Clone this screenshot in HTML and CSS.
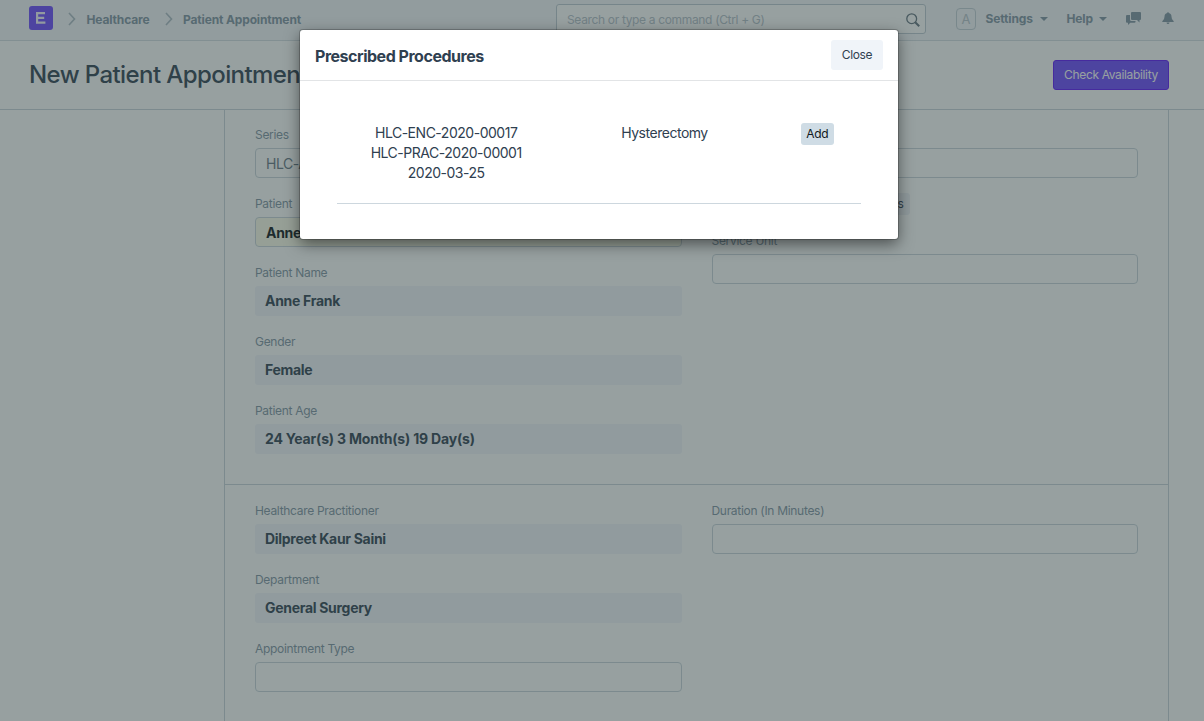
FILE: index.html
```html
<!DOCTYPE html>
<html lang="en">
<head>
<meta charset="utf-8">
<title>New Patient Appointment</title>
<link rel="stylesheet" href="styles.css">
</head>
<body>
<header class="navbar">
  <div class="logo"><svg width="24" height="24" viewBox="0 0 24 24"><rect width="24" height="24" rx="3" fill="#6a46ff"/><path d="M16 7.1H8.1V16.7H16.4M8.1 11.9H15.2" fill="none" stroke="#f4f2ff" stroke-width="2.2"/></svg></div>
  <svg class="chev" width="8" height="14" viewBox="0 0 8 14"><path d="M1 1l5.500 6L1 13" /></svg>
  <a class="crumb crumb-first">Healthcare</a>
  <svg class="chev" width="8" height="14" viewBox="0 0 8 14"><path d="M1 1l5.500 6L1 13" /></svg>
  <a class="crumb crumb-last">Patient Appointment</a>
  <div class="search">
    <span class="search-text">Search or type a command (Ctrl + G)</span>
    <svg class="lens" width="14" height="14" viewBox="0 0 14 14"><circle cx="5.700" cy="5.700" r="4.900" fill="none" stroke="#62727e" stroke-width="1.300"/><path d="M9.200 9.200l4 4" stroke="#62727e" stroke-width="2"/></svg>
  </div>
  <div class="avatar">A</div>
  <a class="menu settings">Settings</a><i class="caret"></i>
  <a class="menu help">Help</a><i class="caret"></i>
  <svg class="chat" width="16" height="13" viewBox="0 0 16 13"><path fill="#7f93a2" d="M6 0h8q1 0 1 1v6q0 1-1 1h-.5v2.600L11 8H6q-1 0-1-1V1q0-1 1-1z"/><path fill="#7f93a2" d="M1 3h3v4.500q0 1.500 1.500 1.500h4v.8q0 1-1 1H4.300L2 13v-2.200H1q-1 0-1-1V4q0-1 1-1z"/></svg>
  <svg class="bell" width="12" height="12" viewBox="0 0 12 12"><path fill="#7f93a2" d="M5.200 1V.6q.8-.9 1.600 0V1q2.700.6 2.700 3.700 0 2.900 2.200 4.600v.7H.3v-.7Q2.500 7.600 2.500 4.700 2.500 1.600 5.200 1zM4.500 10.500h3q-.2 1.500-1.500 1.500t-1.500-1.500z"/></svg>
</header>
<div class="page-head">
  <h1 class="page-title">New Patient Appointment</h1>
  <button class="primary">Check Availability</button>
</div>
<main class="form">
  <section class="section first">
    <div class="col">
      <div class="field"><label class="label">Series</label><div class="input series">HLC-APP-.YYYY.-</div></div>
      <div class="field"><label class="label">Patient</label><div class="input required">Anne Frank</div></div>
      <div class="field"><label class="label">Patient Name</label><div class="value">Anne Frank</div></div>
      <div class="field"><label class="label">Gender</label><div class="value">Female</div></div>
      <div class="field"><label class="label">Patient Age</label><div class="value age">24 Year(s) 3 Month(s) 19 Day(s)</div></div>
    </div>
    <div class="col">
      <div class="field field-procedure"><label class="label">Procedure</label><div class="input"></div></div>
      <button class="get-procedures">Get Prescribed Clinical Procedures</button>
      <div class="field"><label class="label">Service Unit</label><div class="input"></div></div>
    </div>
  </section>
  <section class="section">
    <div class="col">
      <div class="field"><label class="label">Healthcare Practitioner</label><div class="value">Dilpreet Kaur Saini</div></div>
      <div class="field"><label class="label">Department</label><div class="value">General Surgery</div></div>
      <div class="field"><label class="label">Appointment Type</label><div class="input"></div></div>
    </div>
    <div class="col">
      <div class="field"><label class="label">Duration (In Minutes)</label><div class="input"></div></div>
    </div>
  </section>
</main>
<div class="backdrop">
  <div class="modal">
    <div class="modal-head"><h2 class="modal-title">Prescribed Procedures</h2><button class="close">Close</button></div>
    <div class="row">
      <div class="refs">HLC-ENC-2020-00017<br>HLC-PRAC-2020-00001<br>2020-03-25</div>
      <div class="procedure">Hysterectomy</div>
      <div class="action"><button class="add">Add</button></div>
    </div>
  </div>
</div>
</body>
</html>
```
FILE: styles.css
```css
* { box-sizing: border-box; }
body { margin: 0; height: 721px; overflow: hidden; background: #fff; color: #2f4050; font: 14px/20px Inter, "Liberation Sans", sans-serif; letter-spacing: -.48px; }
button { font-family: inherit; padding: 0 0 1px; border: 0; white-space: nowrap; letter-spacing: -.35px; }
h1, h2 { margin: 0; }
.navbar { display: flex; align-items: center; height: 41px; padding: 0 30px 4px 29px; background: #f4f6fa; border-bottom: 1px solid #d4dde2; font-size: 12px; color: #7f93a2; white-space: nowrap; }
.logo { width: 24px; height: 24px; margin-right: 15px; }
.chev { fill: none; stroke: #acbac4; stroke-width: 1.6; margin-top: 2px; }
.crumb, .menu { font-weight: 700; letter-spacing: -.14px; }
.crumb { padding-top: 4px; }
.menu { padding-top: 2px; }
.crumb-first { width: 78px; margin-left: 10.5px; }
.crumb-last { margin-left: 10.5px; width: 120px; }
.search { display: flex; align-items: center; justify-content: space-between; width: 370px; height: 30px; margin-left: auto; margin-top: 2px; padding: 0 5px 0 10px; border: 1px solid #bdc9d2; border-radius: 3px; background: #fff; color: #b4c0c9; letter-spacing: -.34px; }
.search-text { padding-top: 2px; }
.lens { margin-top: 2px; }
.avatar { width: 20px; height: 22px; margin: 2px 9.5px 0 30px; border: 1px solid #c2ced6; border-radius: 4px; text-align: center; font-size: 13px; line-height: 20px; letter-spacing: 0; color: #b8c4cc; }
.settings { width: 54px; }
.help { width: 32px; margin-left: 19px; }
.caret { border: 4px solid transparent; border-top-color: #7f93a2; border-bottom: 0; margin-top: 2px; }
.chat { margin-left: 19.5px; }
.bell { margin-left: 20px; }
.page-head { display: flex; justify-content: space-between; align-items: center; height: 69px; padding: 0 35px 0 29px; border-bottom: 1px solid #c8d3da; }
.page-title { font-size: 24px; font-weight: 500; line-height: 30px; letter-spacing: -.59px; }
.primary { width: 116px; height: 30px; border: 1px solid #5c14fa; border-radius: 3px; background: #6a46ff; color: #fff; font-size: 12px; }
.form { margin: 0 35px 0 224px; height: 620px; border: solid #c8d3da; border-width: 0 1px; }
.section { display: grid; grid-template-columns: 1fr 1fr; gap: 30px; padding: 16px 30px 14px; border-top: 1px solid #c8d3da; }
.first { padding-top: 15px; border-top: 0; }
.field { margin-bottom: 16px; }
.label { display: block; height: 23px; line-height: 19px; font-size: 12px; letter-spacing: -.3px; color: #7f93a2; }
.input { height: 30px; padding: 0 10px; line-height: 29px; border: 1px solid #c8d3da; border-radius: 4px; color: #667784; }
.series { letter-spacing: -.45px; }
.required { background: #fdfdeb; color: #0d1419; font-weight: 700; line-height: 30px; letter-spacing: -.3px; }
.value { height: 30px; padding: 0 10px; line-height: 30px; font-weight: 700; letter-spacing: -.3px; background: #f3f5fa; border-radius: 3px; }
.age { letter-spacing: -.19px; }
.field-procedure { margin-bottom: 15px; }
.get-procedures { display: block; width: 198px; height: 22px; margin-bottom: 16px; padding-right: 6px; text-align: right; border-radius: 3px; background: #eef1f7; color: #2f4050; font-size: 12px; overflow: hidden; letter-spacing: -.3px; }
.backdrop { position: absolute; inset: 0; padding-top: 30px; background: rgba(48, 65, 65, .5); }
.modal { width: 598px; height: 209px; margin-left: 300px; border-radius: 3px; background: #fff; box-shadow: 0 0 0 1px rgba(0,0,0,.2), 0 5px 15px rgba(0,0,0,.5); }
.modal-head { display: flex; align-items: center; justify-content: space-between; height: 51px; padding: 0 15px; border-bottom: 1px solid #e2e4e6; }
.modal-title { font-size: 16px; font-weight: 700; padding-top: 2px; letter-spacing: -.48px; }
.close { width: 52px; height: 30px; border-radius: 3px; background: #f0f4f9; color: #2f4050; font-size: 12px; }
.row { display: grid; grid-template-columns: 5fr 5fr 2fr; margin: 42px 37px 0; height: 81px; border-bottom: 1px solid #cdd7de; text-align: center; }
.action { line-height: 0; }
.add { width: 33px; height: 22px; border-radius: 3px; background: #cfdce5; color: #111820; font-size: 12px; }
```
